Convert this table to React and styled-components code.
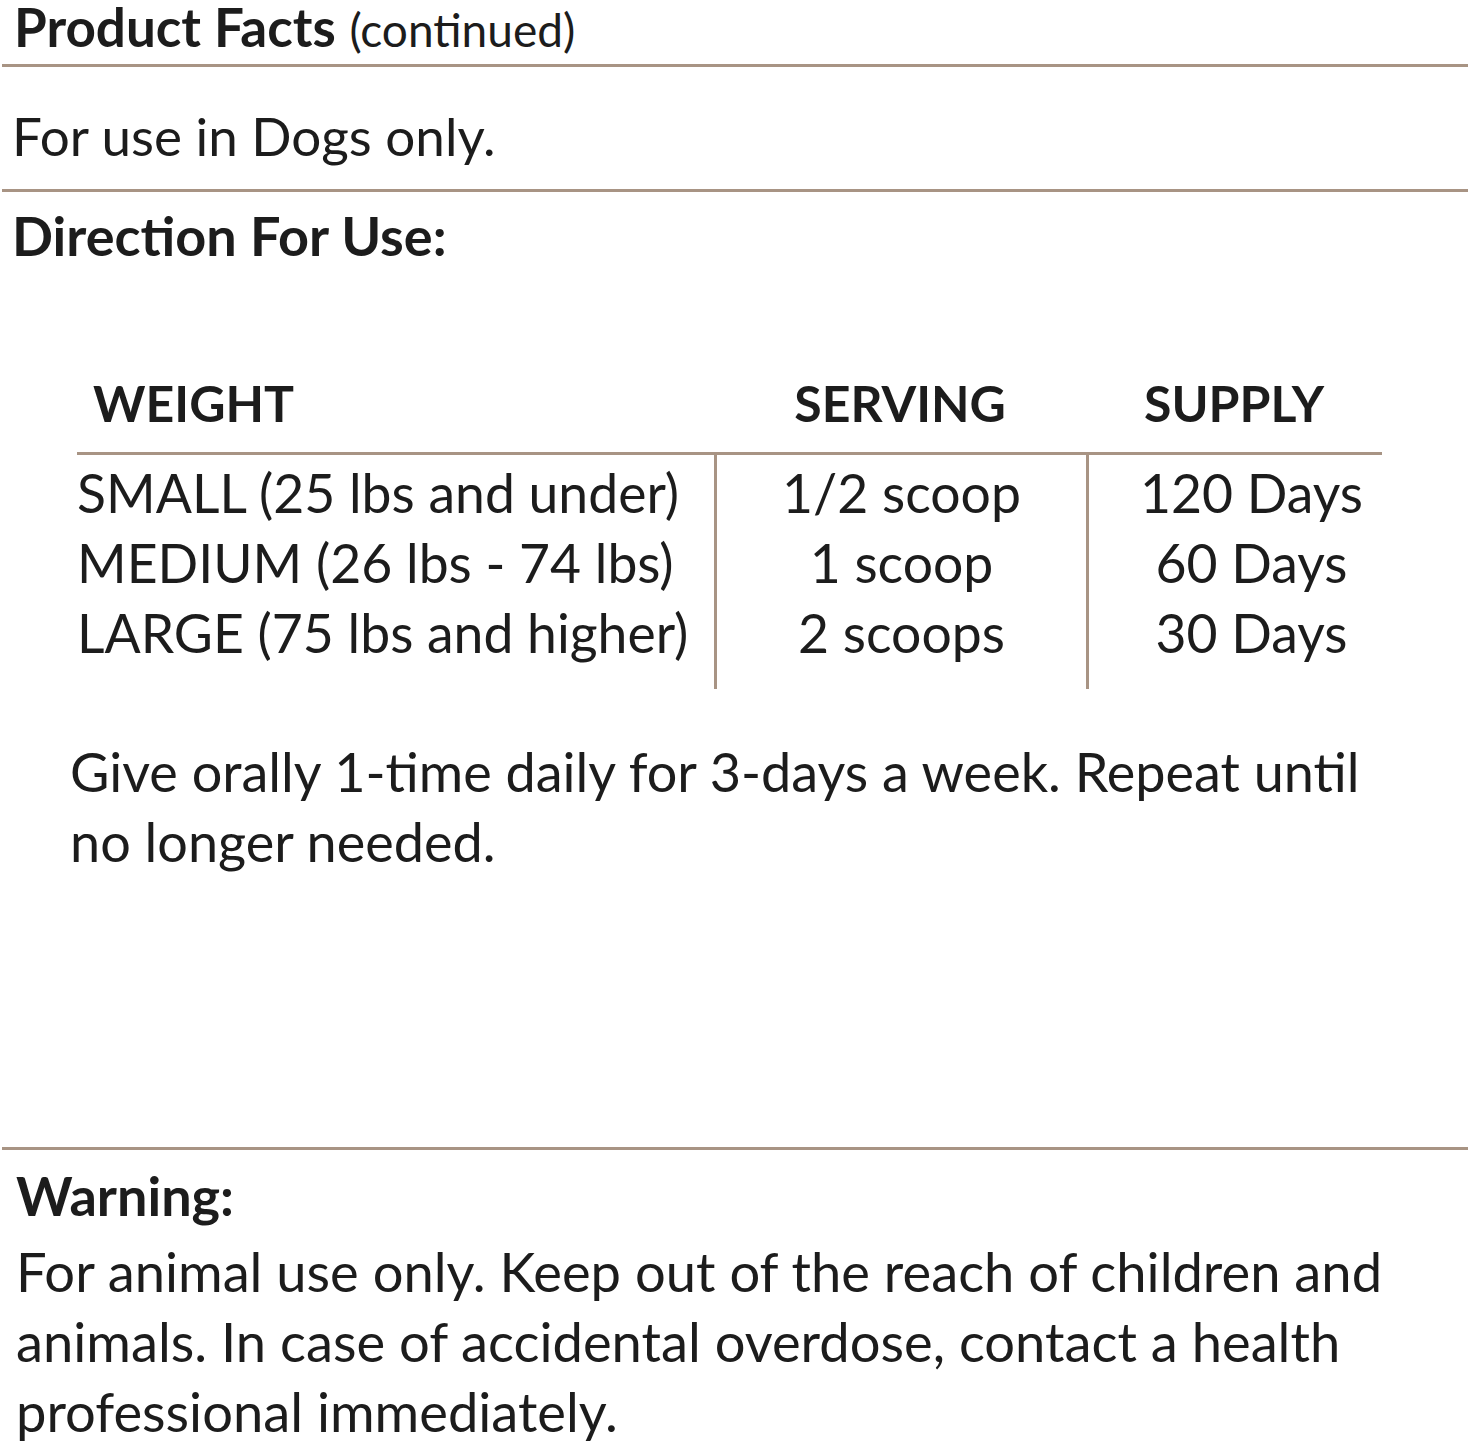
import React from 'react'
import styled, { createGlobalStyle } from 'styled-components'

const rows = [
  { weight: 'SMALL (25 lbs and under)', serving: '1/2 scoop', supply: '120 Days' },
  { weight: 'MEDIUM (26 lbs - 74 lbs)', serving: '1 scoop', supply: '60 Days' },
  { weight: 'LARGE (75 lbs and higher)', serving: '2 scoops', supply: '30 Days' },
]

const App = () => {
  return (
    <Page>
      <GlobalStyle />
      <TitleBar>
        <Strong>Product Facts</Strong> <Light>(continued)</Light>
      </TitleBar>
      <Rule />
      <Notice>For use in Dogs only.</Notice>
      <Rule />
      <Directions>
        <Heading>Direction For Use:</Heading>
        <Table>
          <HeadCell $pad="16px">WEIGHT</HeadCell>
          <HeadCell $center>SERVING</HeadCell>
          <HeadCell $center>SUPPLY</HeadCell>
          <Column>
            {rows.map((r) => <Cell key={r.weight}>{r.weight}</Cell>)}
          </Column>
          <Column $divider $center>
            {rows.map((r) => <Cell key={r.serving}>{r.serving}</Cell>)}
          </Column>
          <Column $divider $center $shift="32px">
            {rows.map((r) => <Cell key={r.supply}>{r.supply}</Cell>)}
          </Column>
        </Table>
        <Note>Give orally 1-time daily for 3-days a week. Repeat until no longer needed.</Note>
      </Directions>
      <Rule />
      <Warning>
        <Heading>Warning:</Heading>
        <Body>
          For animal use only. Keep out of the reach of children and animals. In case of accidental overdose, contact a health professional immediately.
        </Body>
      </Warning>
    </Page>
  )
}

const GlobalStyle = createGlobalStyle`
  html, body {
    margin: 0;
    padding: 0;
    background: #ffffff;
  }
  body {
    font-family: Lato, "Open Sans", sans-serif;
    color: #1c1c1c;
  }
`

const Page = styled.div`
  width: 1468px;
  height: 1442px;
  overflow: hidden;
`

const Rule = styled.div`
  height: 3px;
  margin-left: 2px;
  background: #a89484;
`

const TitleBar = styled.div`
  height: 64px;
  padding-left: 14px;
  font-size: 53px;
  line-height: 54px;
  white-space: nowrap;
`

const Strong = styled.span`
  font-weight: 700;
`

const Light = styled.span`
  font-weight: 400;
  font-size: 46px;
`

const Notice = styled.div`
  height: 122px;
  box-sizing: border-box;
  padding: 42px 0 0 12px;
  font-size: 53px;
  line-height: 1;
`

const Heading = styled.div`
  font-size: 54px;
  font-weight: 700;
  line-height: 60px;
`

const Directions = styled.div`
  height: 955px;
  box-sizing: border-box;
  padding: 14px 0 0 12px;
`

const Table = styled.div`
  display: grid;
  grid-template-columns: 637px 372px 296px;
  margin: 107px 0 0 65px;
  font-size: 53.5px;
`

const HeadCell = styled.div`
  font-weight: 700;
  font-size: 50px;
  line-height: 60px;
  padding: 0 0 19px ${(p) => p.$pad || '0'};
  text-align: ${(p) => (p.$center ? 'center' : 'left')};
  border-bottom: 3px solid #a89484;
`

const Column = styled.div`
  display: flex;
  flex-direction: column;
  padding: 2px 0 22px ${(p) => p.$shift || '0'};
  align-items: ${(p) => (p.$center ? 'center' : 'flex-start')};
  border-left: ${(p) => (p.$divider ? '3px solid #a89484' : 'none')};
`

const Cell = styled.div`
  line-height: 70px;
  white-space: nowrap;
`

const Note = styled.p`
  margin: 48px 0 0 58px;
  width: 1310px;
  font-size: 54px;
  line-height: 70px;
`

const Warning = styled.div`
  padding: 16px 0 0 16px;
`

const Body = styled.p`
  margin: 10px 0 0;
  width: 1420px;
  font-size: 54.3px;
  line-height: 70px;
`

export default App
